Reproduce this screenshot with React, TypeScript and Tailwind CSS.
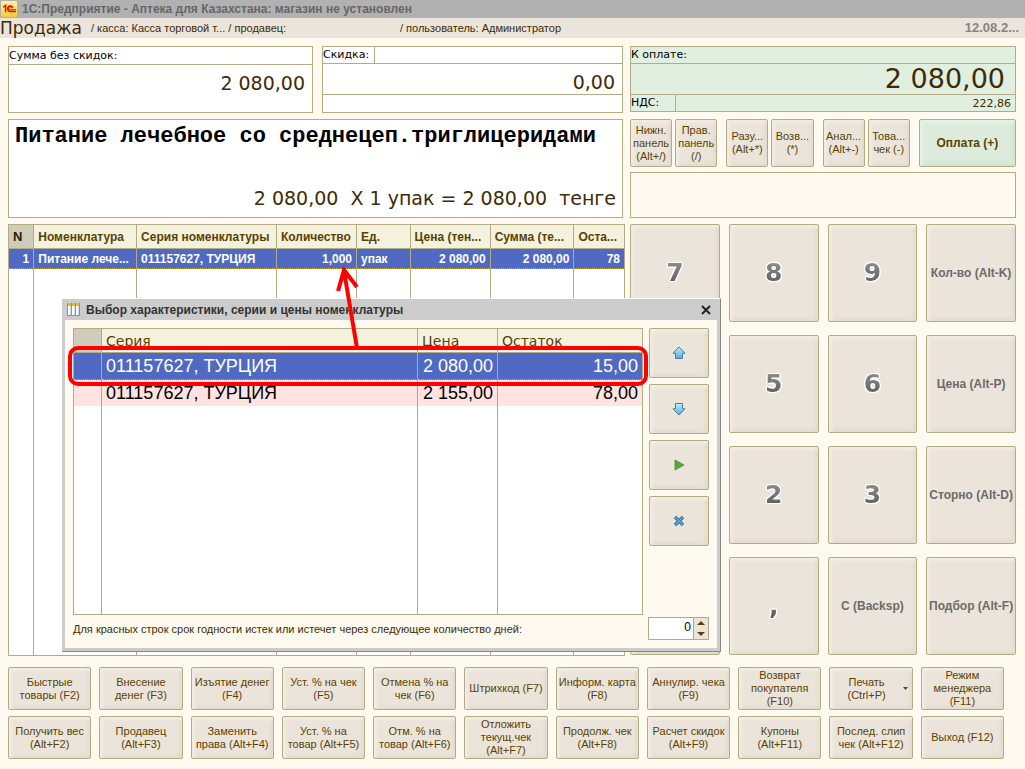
import React from "react";

const btn =
  "flex items-center justify-center rounded-[2px] border border-[#b3ab84] bg-[#ebe4da] text-center font-['Liberation_Sans',sans-serif] text-[#594304] shadow-[inset_3px_3px_3px_#f2ece3,inset_-3px_-3px_3px_#e3dcd0]";
const label = "font-['DejaVu_Sans',sans-serif] text-[11px] leading-4 text-black";
const amount = "font-['DejaVu_Sans',sans-serif] text-[19px] leading-6 text-[#3d2c05]";

function SmallButton({ lines }: { lines: string[] }) {
  return (
    <button className={`${btn} h-12 min-w-0 flex-1 flex-col text-[11px] leading-[13px] whitespace-nowrap`}>
      {lines.map((l) => (
        <span key={l}>{l}</span>
      ))}
    </button>
  );
}

const actions: string[][] = [
  ["Быстрые", "товары (F2)"],
  ["Внесение", "денег (F3)"],
  ["Изъятие денег", "(F4)"],
  ["Уст. % на чек", "(F5)"],
  ["Отмена % на", "чек (F6)"],
  ["Штрихкод (F7)"],
  ["Информ. карта", "(F8)"],
  ["Аннулир. чека", "(F9)"],
  ["Возврат", "покупателя", "(F10)"],
  ["Печать", "(Ctrl+P)"],
  ["Режим", "менеджера", "(F11)"],
  ["Получить вес", "(Alt+F2)"],
  ["Продавец", "(Alt+F3)"],
  ["Заменить", "права (Alt+F4)"],
  ["Уст. % на", "товар (Alt+F5)"],
  ["Отм. % на", "товар (Alt+F6)"],
  ["Отложить", "текущ.чек", "(Alt+F7)"],
  ["Продолж. чек", "(Alt+F8)"],
  ["Расчет скидок", "(Alt+F9)"],
  ["Купоны", "(Alt+F11)"],
  ["Послед. слип", "чек (Alt+F12)"],
  ["Выход (F12)"],
];

const keys = [
  "7", "8", "9", "Кол-во (Alt-K)",
  "4", "5", "6", "Цена (Alt-P)",
  "1", "2", "3", "Сторно (Alt-D)",
  "0", ",", "C (Backsp)", "Подбор (Alt-F)",
];

function Key({ text }: { text: string }) {
  return (
    <button className={`${btn} h-[98px] min-w-0 whitespace-nowrap`}>
      {text.length === 1 ? (
        <span className="bg-gradient-to-b from-[#959595] to-[#555555] bg-clip-text font-['DejaVu_Sans',sans-serif] text-[25px] leading-7 font-bold text-transparent [filter:drop-shadow(1px_0_0_#fff)_drop-shadow(-1px_0_0_#fff)_drop-shadow(0_1px_0_#fff)_drop-shadow(0_-1px_0_#fff)]">
          {text}
        </span>
      ) : (
        <span className="text-[12px] leading-4 font-bold text-[#6b6b6b]">{text}</span>
      )}
    </button>
  );
}

function Logo() {
  return (
    <svg width="16" height="16" viewBox="0 0 16 16" className="shrink-0">
      <defs>
        <linearGradient id="logoBg" x1="0" y1="0" x2="0" y2="1">
          <stop offset="0" stopColor="#fff0a0" />
          <stop offset="0.5" stopColor="#fde26a" />
          <stop offset="1" stopColor="#f8c832" />
        </linearGradient>
      </defs>
      <rect width="16" height="16" rx="1" fill="url(#logoBg)" />
      <path d="M2.2 6.2 4.6 4.6v6.6" fill="none" stroke="#d91a10" strokeWidth="1.6" />
      <path d="M11.8 6.6A2.6 2.6 0 1 0 9.5 10.3H15" fill="none" stroke="#d91a10" strokeWidth="1.8" />
      <path d="M10.6 7.4A1 1 0 1 0 9.5 8.5H15" fill="none" stroke="#d91a10" strokeWidth="0.8" />
    </svg>
  );
}

function GridIcon() {
  return (
    <svg width="13" height="13" viewBox="0 0 13 13" className="shrink-0">
      <rect width="13" height="13" fill="#6f9ab8" />
      {[0, 1, 2].map((i) => (
        <g key={i}>
          <rect x={1 + i * 4} y="0" width="3" height="3" fill="#e8bd22" />
          <rect x={1 + i * 4} y="3" width="3" height="9" fill="#ffffff" />
          <rect x={3 + i * 4} y="3" width="1" height="9" fill="#c8dcec" />
        </g>
      ))}
    </svg>
  );
}

function ArrowIcon({ down }: { down?: boolean }) {
  return (
    <svg width="14" height="14" viewBox="0 0 14 14" className={down ? "rotate-180" : ""}>
      <defs>
        <linearGradient id={down ? "arrowDown" : "arrowUp"} x1="0" y1={down ? "1" : "0"} x2="0" y2={down ? "0" : "1"}>
          <stop offset="0" stopColor="#c4ecff" />
          <stop offset="1" stopColor="#55a9dc" />
        </linearGradient>
      </defs>
      <path
        d="M7 1 13 7.2H10.5V12.5H3.5V7.2H1Z"
        fill={down ? "url(#arrowDown)" : "url(#arrowUp)"}
        stroke="#4c7f9c"
        strokeWidth="1"
        strokeLinejoin="round"
      />
    </svg>
  );
}

const headCell =
  "border-r border-b border-[#b3ab84] bg-[#f4f1dc] px-1 text-left font-bold whitespace-nowrap text-[#594304] overflow-hidden";
const rowCell =
  "border-r border-[#b3ab84] bg-[#5069c2] px-1 font-bold text-white whitespace-nowrap overflow-hidden [border-bottom:1px_dotted_#c9a93a]";

function GoodsTable() {
  const heads = ["Номенклатура", "Серия номенклатуры", "Количество", "Ед.", "Цена (тен...", "Сумма (те...", "Оста..."];
  return (
    <table className="h-[432px] w-full table-fixed border-separate border-spacing-0 border-t border-l border-[#b3ab84] bg-white font-['Liberation_Sans',sans-serif] text-[12px] leading-4">
      <colgroup>
        <col className="w-[4.1%]" />
        <col className="w-[16.7%]" />
        <col className="w-[22.7%]" />
        <col className="w-[13%]" />
        <col className="w-[8.7%]" />
        <col className="w-[13%]" />
        <col className="w-[13.6%]" />
        <col className="w-[8.2%]" />
      </colgroup>
      <thead>
        <tr className="h-6">
          <th className="border-r border-b border-[#b3ab84] bg-[#cfccb9] px-1 text-left text-[13px] font-bold text-[#2e2104]">N</th>
          {heads.map((h) => (
            <th key={h} className={headCell}>{h}</th>
          ))}
        </tr>
      </thead>
      <tbody>
        <tr className="h-5">
          <td className={`${rowCell} text-right`}>1</td>
          <td className={rowCell}>Питание лече...</td>
          <td className={rowCell}>011157627, ТУРЦИЯ</td>
          <td className={`${rowCell} text-right`}>1,000</td>
          <td className={rowCell}>упак</td>
          <td className={`${rowCell} text-right`}>2 080,00</td>
          <td className={`${rowCell} text-right`}>2 080,00</td>
          <td className={`${rowCell} text-right`}>78</td>
        </tr>
        <tr>
          {Array.from({ length: 8 }, (_, i) => (
            <td key={i} className="border-r border-b border-[#b3ab84]" />
          ))}
        </tr>
      </tbody>
    </table>
  );
}

function SeriesTable() {
  const head =
    "border-r border-b border-[#b3ab84] bg-[#f4f1dc] px-1 text-left font-['DejaVu_Sans',sans-serif] text-[14px] leading-5 font-normal text-[#594304]";
  const sel = "border-r border-[#b3ab84] bg-[#5069c2] px-1 text-white [border-bottom:1px_dotted_#c9a93a]";
  const red = "border-r border-[#b3ab84] bg-[#ffe3e0] px-1 text-black";
  return (
    <table className="h-[287px] w-full table-fixed border-separate border-spacing-0 border-t border-l border-[#b3ab84] bg-white font-['Liberation_Sans',sans-serif] text-[18px] leading-5">
      <colgroup>
        <col className="w-[28px]" />
        <col />
        <col className="w-20" />
        <col className="w-[145px]" />
      </colgroup>
      <thead>
        <tr className="h-6">
          <th className="border-r border-b border-[#b3ab84] bg-[#cfccb9]" />
          <th className={head}>Серия</th>
          <th className={head}>Цена</th>
          <th className={head}>Остаток</th>
        </tr>
      </thead>
      <tbody>
        <tr className="h-[27px]">
          <td className={sel} />
          <td className={sel}>011157627, ТУРЦИЯ</td>
          <td className={`${sel} text-right`}>2 080,00</td>
          <td className={`${sel} text-right`}>15,00</td>
        </tr>
        <tr className="h-[26px]">
          <td className={red} />
          <td className={red}>011157627, ТУРЦИЯ</td>
          <td className={`${red} text-right`}>2 155,00</td>
          <td className={`${red} text-right`}>78,00</td>
        </tr>
        <tr>
          {[0, 1, 2, 3].map((i) => (
            <td key={i} className="border-r border-b border-[#b3ab84]" />
          ))}
        </tr>
      </tbody>
    </table>
  );
}

function SeriesDialog() {
  const side = `${btn} h-[50px] w-[60px]`;
  return (
    <div
      role="dialog"
      aria-labelledby="dialog-title"
      className="absolute top-[298px] left-[62px] w-[659px] border-t border-r border-b border-t-white border-r-[#85858a] border-b-[#85858a] bg-[#cccccc] font-['Liberation_Sans',sans-serif]"
    >
      <div className="flex h-[21px] items-center gap-[6px] pr-2 pl-[5px]">
        <GridIcon />
        <h2 id="dialog-title" className="flex-1 text-[12px] leading-4 font-bold text-[#333333]">
          Выбор характеристики, серии и цены номенклатуры
        </h2>
        <button aria-label="Закрыть" className="flex h-4 w-3 items-center justify-center">
          <svg width="10" height="10" viewBox="0 0 10 10">
            <path d="M1 1 9 9M9 1 1 9" stroke="#222" strokeWidth="2" />
          </svg>
        </button>
      </div>
      <div className="mx-[3px] mb-[3px] bg-[#fffaf0] px-2 pt-2 pb-2">
        <div className="flex gap-[6px]">
          <div className="min-w-0 flex-1">
            <SeriesTable />
          </div>
          <div className="flex flex-col gap-[6px]">
            <button aria-label="Вверх" className={side}><ArrowIcon /></button>
            <button aria-label="Вниз" className={side}><ArrowIcon down /></button>
            <button aria-label="Выбрать" className={side}>
              <svg width="12" height="12" viewBox="0 0 12 12">
                <path d="M2 1 11 6 2 11Z" fill="#45b524" stroke="#5b7a50" strokeWidth="0.8" />
              </svg>
            </button>
            <button aria-label="Отмена" className={side}>
              <svg width="12" height="12" viewBox="0 0 12 12">
                <path d="M2 2 10 10M10 2 2 10" stroke="#2f6288" strokeWidth="3.2" />
                <path d="M2.2 2.2 9.8 9.8M9.8 2.2 2.2 9.8" stroke="#5aa5d6" strokeWidth="1.8" />
              </svg>
            </button>
          </div>
        </div>
        <div className="mt-[2px] flex items-center justify-between">
          <label htmlFor="days" className="text-[11px] leading-4 text-[#3d2c05]">
            Для красных строк срок годности истек или истечет через следующее количество дней:
          </label>
          <div className="flex h-[23px] w-[61px] border border-[#b3ab84] bg-white">
            <input
              id="days"
              type="text"
              inputMode="numeric"
              defaultValue="0"
              className="min-w-0 flex-1 px-[2px] pb-1 text-right text-[12px] leading-4 text-black outline-none"
            />
            <div className="flex w-[15px] flex-col border-l border-[#b3ab84] bg-[#ebe4da]">
              <button aria-label="Увеличить" className="flex flex-1 items-center justify-center">
                <svg width="8" height="4" viewBox="0 0 8 4"><path d="M0 4 4 0 8 4Z" fill="#594304" /></svg>
              </button>
              <button aria-label="Уменьшить" className="flex flex-1 items-center justify-center">
                <svg width="8" height="4" viewBox="0 0 8 4"><path d="M0 0 4 4 8 0Z" fill="#594304" /></svg>
              </button>
            </div>
          </div>
        </div>
      </div>
    </div>
  );
}

export default function App() {
  return (
    <div className="relative min-h-screen bg-[#fffaf0] font-['Liberation_Sans',sans-serif]">
      <div className="flex h-[18px] items-center gap-[5px] bg-[#b1b1b1] pl-px">
        <Logo />
        <span className="text-[12px] leading-4 font-bold text-[#666666]">
          1С:Предприятие - Аптека для Казахстана: магазин не установлен
        </span>
      </div>
      <header className="flex h-5 items-center bg-[#ebe4da] pr-[6px] text-[11px] leading-4 whitespace-pre text-[#3d2c05]">
        <h1 className="w-[91px] font-['DejaVu_Sans',sans-serif] text-[17px] leading-5">Продажа</h1>
        <span className="w-[309px]">/ касса: Касса торговой т... / продавец:</span>
        <span className="flex-1">/ пользователь: Администратор</span>
        <span className="text-[13px] font-bold text-[#858585]">12.08.2...</span>
      </header>

      <main className="pt-2 pr-[9px] pl-2">
        <div className="grid grid-cols-[615fr_386fr] gap-x-[7px]">
          <div className="flex min-w-0 flex-col gap-[6px]">
            <div className="grid h-[67px] grid-cols-[305fr_301fr] gap-[9px]">
              <div className="flex flex-col border border-[#b3ab84] bg-white">
                <div className={`${label} h-[18px] border-b border-[#b3ab84] pt-px`}>Сумма без скидок:</div>
                <div className={`${amount} px-[7px] pt-[6px] text-right`}>2 080,00</div>
              </div>
              <div className="flex flex-col border border-[#b3ab84] bg-white">
                <div className="flex h-[17px] border-b border-[#b3ab84]">
                  <div className={`${label} w-[52px] border-r border-[#b3ab84]`}>Скидка:</div>
                </div>
                <div className={`${amount} h-[31px] border-b border-[#b3ab84] px-[7px] pt-[6px] text-right`}>0,00</div>
              </div>
            </div>
            <div className="flex h-[99px] flex-col justify-between border border-[#b3ab84] bg-white px-[6px] pt-[5px] pb-[7px]">
              <div className="font-['Liberation_Mono',monospace] text-[22px] leading-6 font-bold whitespace-nowrap text-black">
                Питание лечебное со среднецеп.триглицеридами
              </div>
              <div className={`${amount} text-right whitespace-pre`}>{"2 080,00  X 1 упак = 2 080,00  тенге"}</div>
            </div>
            <div className="-mr-[2px]">
              <GoodsTable />
            </div>
          </div>

          <div className="flex min-w-0 flex-col">
            <div className="h-[66px] border border-[#b3ab84] bg-[#e1efe0]">
              <div className={`${label} h-[17px] border-b border-[#b3ab84]`}>К оплате:</div>
              <div className="h-[31px] border-b border-[#b3ab84] pr-[10px] text-right font-['DejaVu_Sans',sans-serif] text-[27px] leading-[30px] text-[#3d2c05]">
                2 080,00
              </div>
              <div className="flex h-4">
                <div className={`${label} w-[45px] border-r border-[#b3ab84]`}>НДС:</div>
                <div className={`${label} flex-1 pt-px pr-1 text-right !text-[#3d2c05]`}>222,86</div>
              </div>
            </div>

            <div className="mt-[7px] flex gap-[9px]">
              <div className="flex min-w-0 flex-[88] gap-[3px]">
                <SmallButton lines={["Нижн.", "панель", "(Alt+/)"]} />
                <SmallButton lines={["Прав.", "панель", "(/)"]} />
              </div>
              <div className="flex min-w-0 flex-[88] gap-[3px]">
                <SmallButton lines={["Разу...", "(Alt+*)"]} />
                <SmallButton lines={["Возв...", "(*)"]} />
              </div>
              <div className="flex min-w-0 flex-[88] gap-[3px]">
                <SmallButton lines={["Анал...", "(Alt+-)"]} />
                <SmallButton lines={["Това...", "чек (-)"]} />
              </div>
              <button className="h-12 min-w-0 flex-[96] rounded-[2px] border border-[#b3ab84] bg-[#dcebdc] text-[12px] font-bold whitespace-nowrap text-[#594304] shadow-[inset_3px_3px_3px_#e6f3e6,inset_-3px_-3px_3px_#d2e4d3]">
                Оплата (+)
              </button>
            </div>

            <div className="mt-[5px] h-[46px] border border-[#b3ab84]" />

            <div className="mt-[6px] grid grid-cols-4 gap-x-[9px] gap-y-[13px]">
              {keys.map((k) => (
                <Key key={k} text={k} />
              ))}
            </div>
          </div>
        </div>

        <div className="mt-[11px] mr-3 grid grid-cols-11 gap-x-2 gap-y-[6px] pb-2">
          {actions.map((lines) => (
            <button
              key={lines.join()}
              className={`${btn} h-[43px] min-w-0 text-[11px] leading-[13px] whitespace-nowrap`}
            >
              <span className="flex flex-1 flex-col">
                {lines.map((l) => (
                  <span key={l}>{l}</span>
                ))}
              </span>
              {lines[0] === "Печать" && (
                <svg width="5" height="3" viewBox="0 0 5 3" className="mr-1 shrink-0">
                  <path d="M0 0H5L2.5 3Z" fill="#594304" />
                </svg>
              )}
            </button>
          ))}
        </div>
      </main>

      <SeriesDialog />

      <div className="pointer-events-none absolute top-[346px] left-[68px] h-10 w-[580px] rounded-[10px] border-4 border-[#ff0000]" />
      <svg width="40" height="90" viewBox="0 0 40 90" className="pointer-events-none absolute top-[262px] left-[328px]">
        <path d="M29 86 16 9M10 29 16 8 29 25" fill="none" stroke="#ff0000" strokeWidth="4" />
      </svg>
    </div>
  );
}
